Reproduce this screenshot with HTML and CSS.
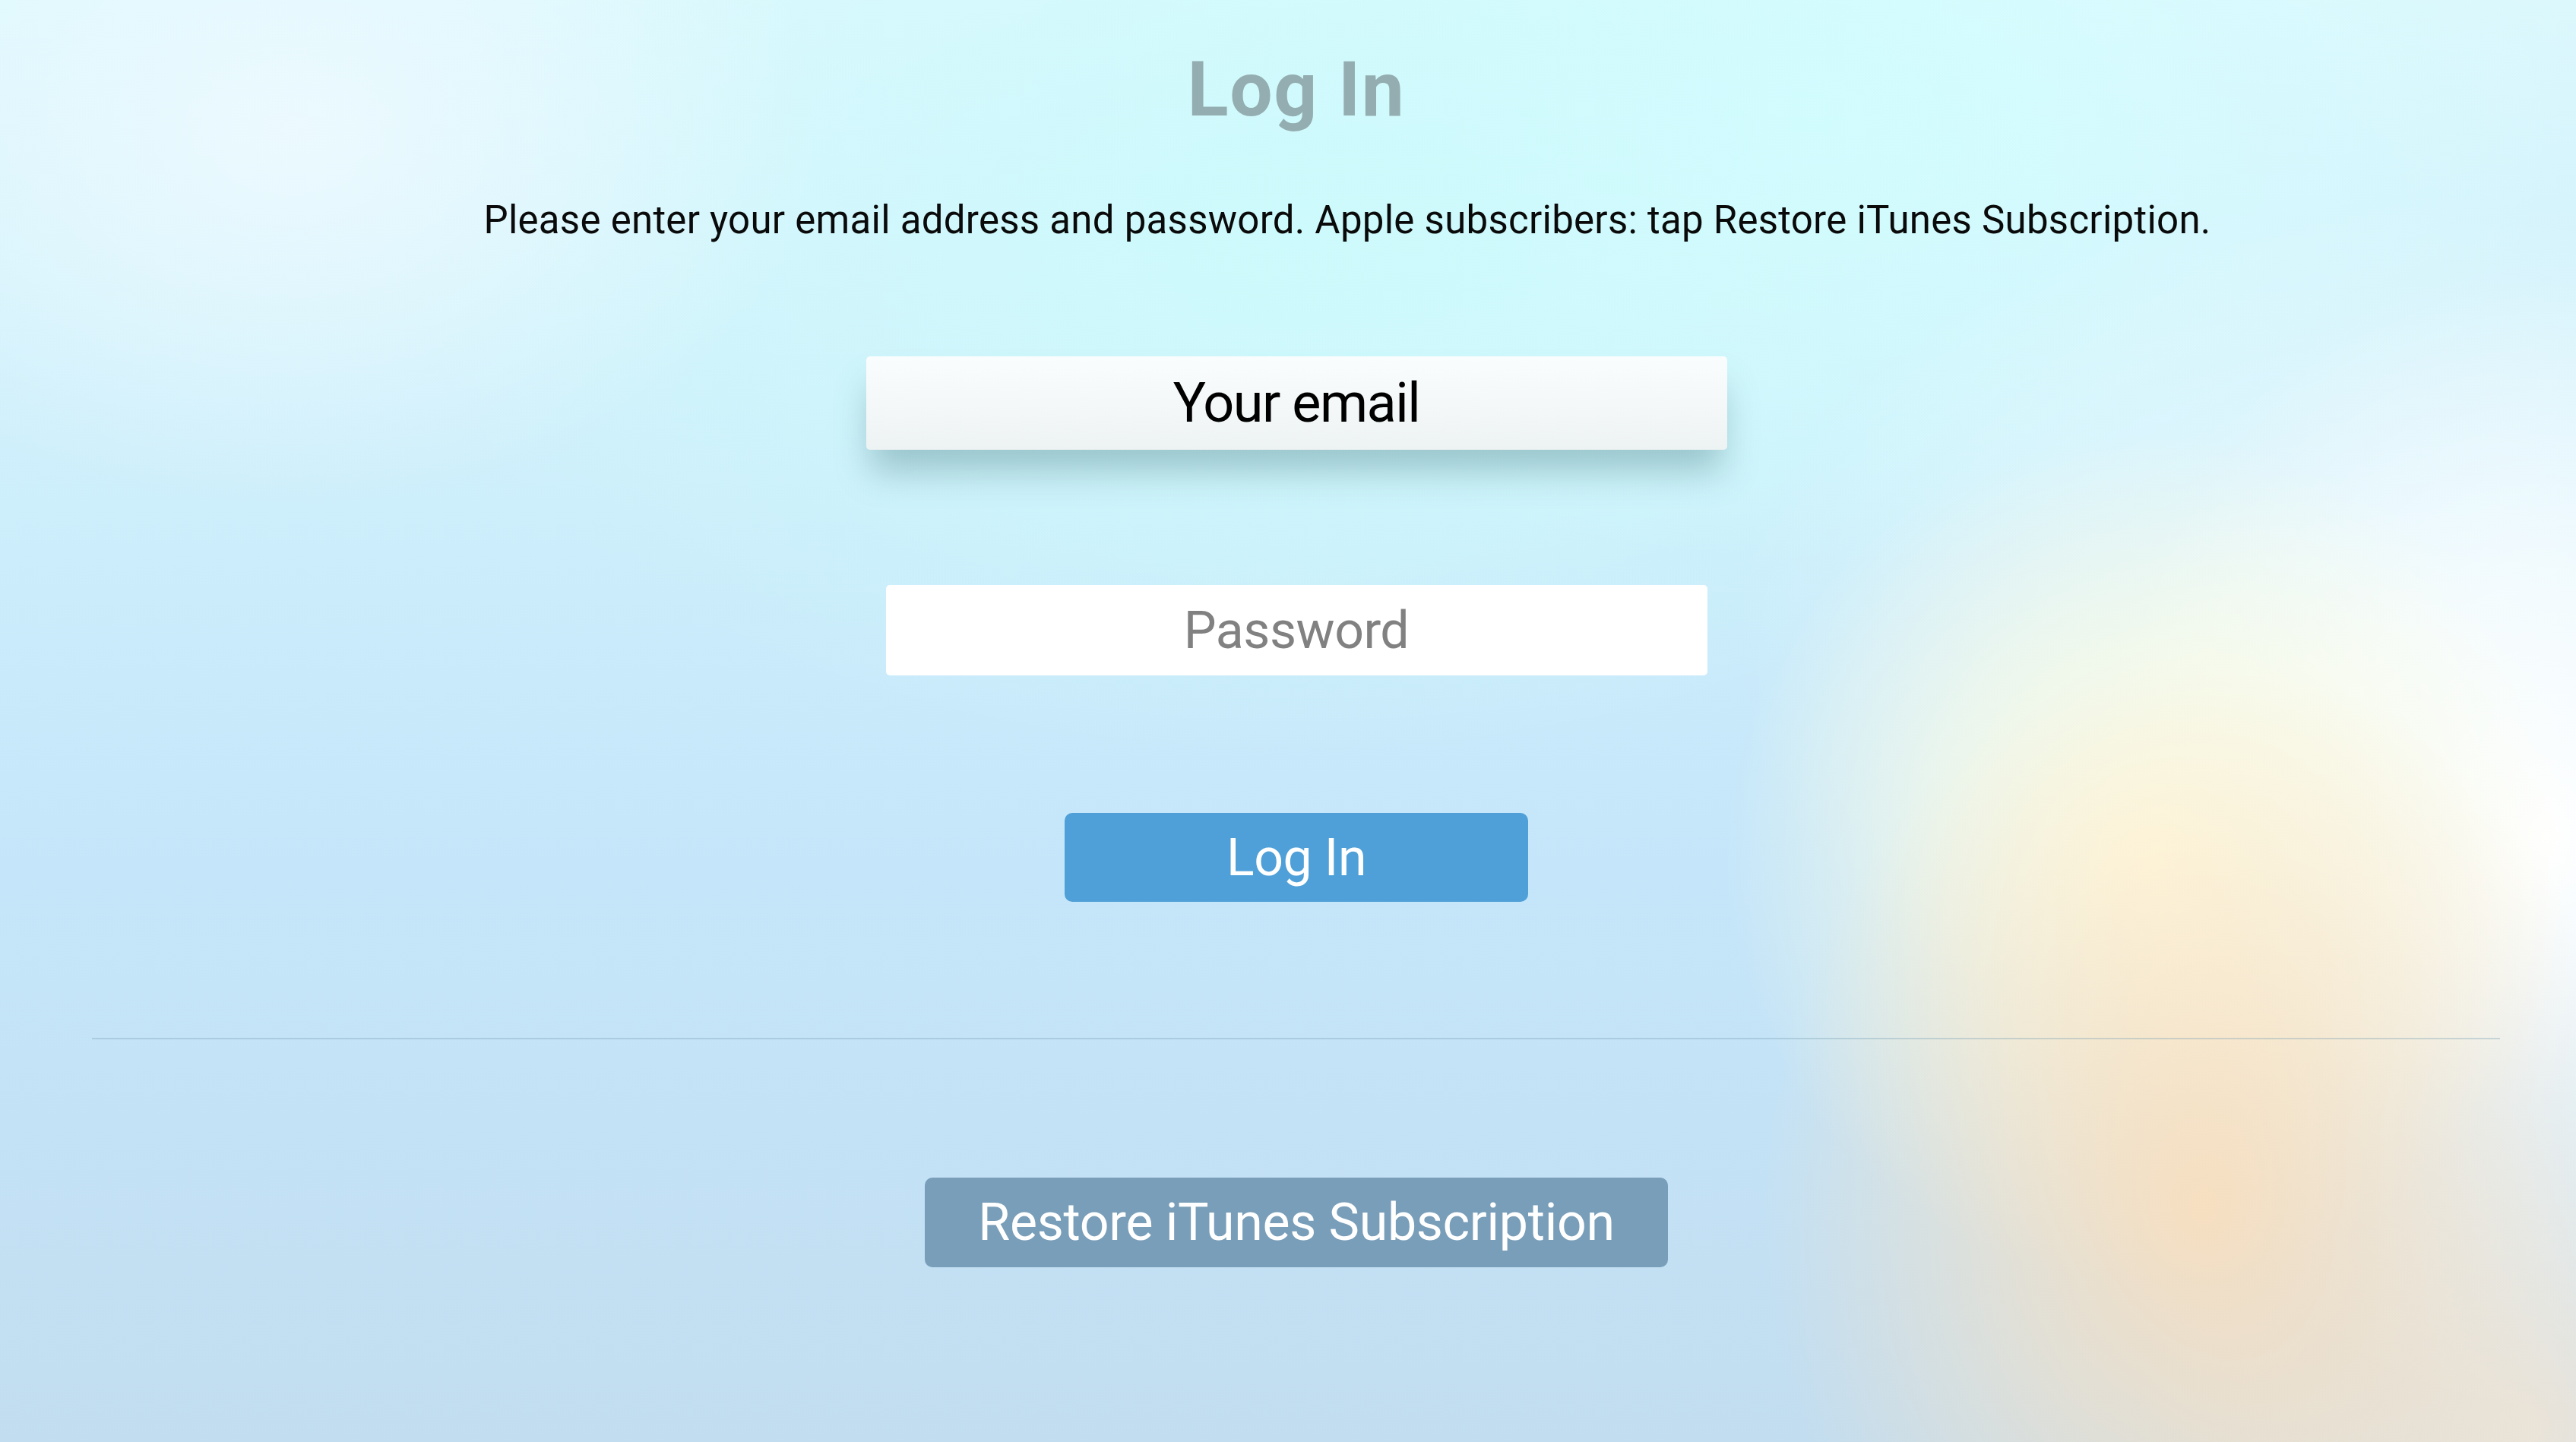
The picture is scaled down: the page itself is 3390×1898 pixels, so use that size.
FILE: index.html
```html
<!DOCTYPE html>
<html lang="en">
<head>
<meta charset="utf-8">
<title>Log In</title>
<link rel="stylesheet" href="styles.css">
</head>
<body>
<main class="screen">
  <h1 class="title">Log In</h1>
  <p class="subtitle">Please enter your email address and password. Apple subscribers: tap Restore iTunes Subscription.</p>
  <div class="field field-focused"><span class="field-text">Your email</span></div>
  <div class="field field-plain"><span class="field-placeholder">Password</span></div>
  <div class="btn btn-primary">Log In</div>
  <hr class="divider">
  <div class="btn btn-secondary">Restore iTunes Subscription</div>
</main>
</body>
</html>
```
FILE: styles.css
```css
html, body {
  margin: 0;
  padding: 0;
  width: 3390px;
  height: 1898px;
  overflow: hidden;
}

body {
  font-family: Roboto, "Liberation Sans", Arial, sans-serif;
  background-color: #c6e6f6;
  background-image:
    radial-gradient(ellipse 580px 720px at 2900px 1590px, rgba(250, 222, 188, 0.92), rgba(250, 224, 192, 0.55) 45%, rgba(250, 224, 192, 0) 100%),
    radial-gradient(ellipse 560px 560px at 2830px 1130px, rgba(255, 252, 226, 1), rgba(255, 252, 226, 0.6) 50%, rgba(255, 252, 226, 0) 100%),
    radial-gradient(ellipse 600px 760px at 3350px 1100px, rgba(255, 255, 255, 1), rgba(255, 255, 255, 0) 100%),
    radial-gradient(ellipse 520px 420px at 3330px 1880px, rgba(232, 228, 220, 1), rgba(232, 228, 220, 0) 100%),
    radial-gradient(ellipse 900px 600px at 3180px 850px, rgba(246, 254, 255, 0.7), rgba(246, 254, 255, 0) 100%),
    radial-gradient(ellipse 700px 500px at 380px 170px, rgba(238, 250, 255, 0.9), rgba(238, 250, 255, 0) 100%),
    radial-gradient(ellipse 1200px 700px at 1700px 300px, rgba(205, 250, 252, 1), rgba(205, 250, 252, 0) 100%),
    radial-gradient(ellipse 1000px 600px at 2400px 150px, rgba(212, 253, 255, 1), rgba(212, 253, 255, 0) 100%),
    linear-gradient(180deg, #dcf8fd 0%, #cdeefb 35%, #c5e6fa 60%, #c2ddf0 100%);
}

.screen {
  display: flex;
  flex-direction: column;
  align-items: center;
  box-sizing: border-box;
  width: 3390px;
  height: 1898px;
  padding-left: 22px;
}

.title {
  margin: 68px 0 0;
  font-size: 100px;
  line-height: 100px;
  height: 100px;
  font-weight: 700;
  color: #94adb0;
  letter-spacing: 1.5px;
}

.subtitle {
  margin: 97px 0 0 134px;
  font-size: 51px;
  line-height: 50px;
  height: 50px;
  color: #0a0a0a;
  white-space: nowrap;
  letter-spacing: 0.26px;
}

.field {
  display: flex;
  align-items: center;
  justify-content: center;
  box-sizing: border-box;
}

.field-focused {
  margin-top: 154px;
  width: 1133px;
  height: 123px;
  border-radius: 5px;
  background: linear-gradient(180deg, #fafdfd 0%, #f3f7f7 60%, #edf2f2 100%);
  box-shadow: 0 34px 46px -6px rgba(80, 130, 138, 0.42);
}

.field-text {
  font-size: 72px;
  line-height: 72px;
  color: #000;
  letter-spacing: -1.5px;
}

.field-plain {
  margin-top: 178px;
  width: 1081px;
  height: 119px;
  border-radius: 5px;
  background: #ffffff;
}

.field-placeholder {
  font-size: 68px;
  line-height: 68px;
  color: #818181;
  letter-spacing: -0.5px;
}

.btn {
  display: flex;
  align-items: center;
  justify-content: center;
  box-sizing: border-box;
  height: 117px;
  border-radius: 10px;
  font-size: 68px;
  line-height: 68px;
  color: #ffffff;
}

.btn-primary {
  margin-top: 181px;
  width: 610px;
  background: #4fa0d8;
  letter-spacing: -0.4px;
}

.divider {
  margin: 179px 0 0;
  align-self: flex-start;
  margin-left: 99px;
  width: 3169px;
  height: 2px;
  border: 0;
  background: rgba(120, 160, 180, 0.35);
}

.btn-secondary {
  margin-top: 182px;
  width: 978px;
  height: 118px;
  background: #799eb9;
  letter-spacing: -0.3px;
}
```
